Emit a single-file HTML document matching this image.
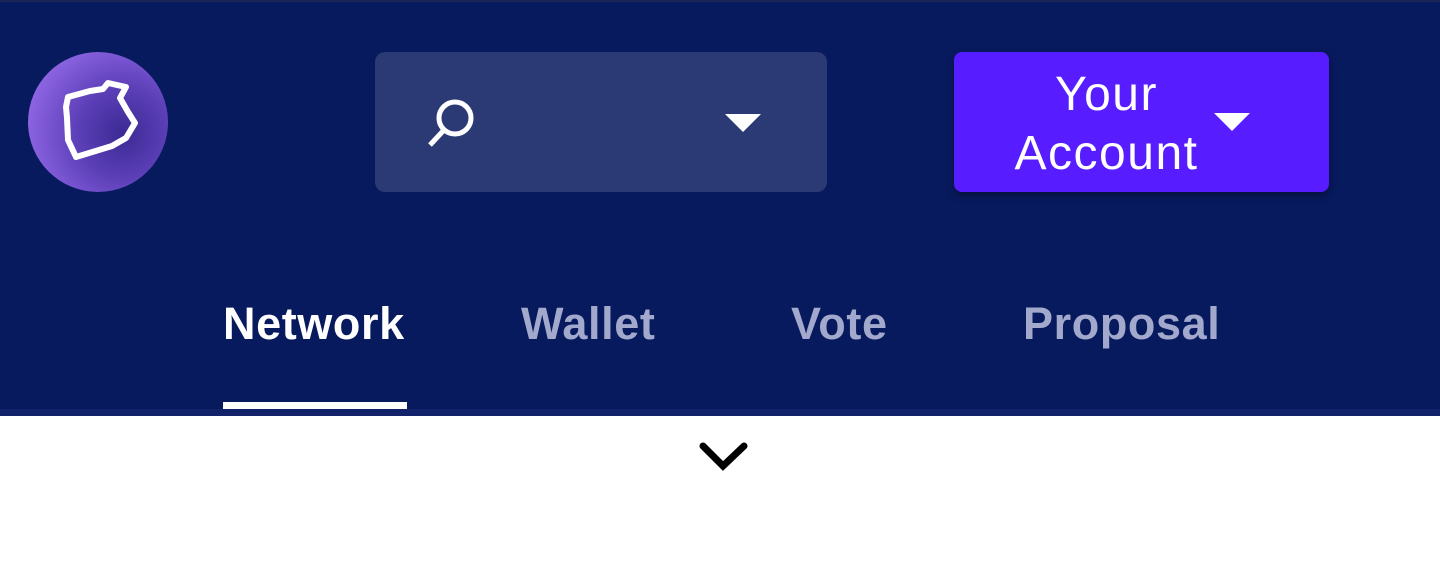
<!DOCTYPE html>
<html><head><meta charset="utf-8"><style>
html,body{margin:0;padding:0;width:1440px;height:578px;overflow:hidden;background:#fff;font-family:"Liberation Sans",sans-serif;}
.nav{position:absolute;left:0;top:0;width:1440px;height:416px;background:#081a5e;}
.topline{position:absolute;left:0;top:0;width:1440px;height:2px;background:#1a2456;}
.strip{position:absolute;left:0;top:409px;width:1440px;height:7px;background:#12226a;}
.logo{position:absolute;left:28px;top:52px;width:140px;height:140px;border-radius:50%;background:radial-gradient(circle at 68% 58%,#3c2a94 0%,#5a3eb6 35%,#8a62e0 75%,#a47cf2 100%);}
.search{position:absolute;left:375px;top:52px;width:452px;height:140px;border-radius:10px;background:#2b3a74;}
.acct{position:absolute;left:954px;top:52px;width:375px;height:140px;border-radius:8px;background:#571cff;box-shadow:0 4px 8px rgba(0,0,0,.35);}
.acct .t{position:absolute;left:0;top:13px;width:305px;text-align:center;color:#fff;font-size:48px;line-height:59px;letter-spacing:1.5px;}
.tab{position:absolute;top:294px;font-size:45px;font-weight:bold;color:#a2a9cc;line-height:60px;letter-spacing:0.6px;}
.ul{position:absolute;left:223px;top:402px;width:184px;height:7px;background:#fff;}
</style></head><body>
<div class="nav">
<div class="topline"></div>
<div class="logo"><svg width="140" height="140" viewBox="0 0 140 140"><path d="M40 45 L62 39 L75 37 L80 31 L98 35 L92 46 L100 60 L107 71 L98 86 L84 94 L48 105 L40 88 L39 66 L38 55 Z" fill="none" stroke="#fff" stroke-width="6" stroke-linejoin="round"/></svg></div>
<div class="search">
<svg style="position:absolute;left:50px;top:42px" width="60" height="60" viewBox="0 0 60 60"><circle cx="30" cy="24" r="16" fill="none" stroke="#fff" stroke-width="5"/><line x1="19" y1="36" x2="5" y2="51" stroke="#fff" stroke-width="5"/></svg>
<svg style="position:absolute;left:350px;top:62px" width="36" height="20"><polygon points="0,0 36,0 18,18" fill="#fff"/></svg>
</div>
<div class="acct"><div class="t">Your<br>Account</div>
<svg style="position:absolute;left:260px;top:61px" width="36" height="20"><polygon points="0,0 36,0 18,18" fill="#fff"/></svg></div>
<div class="tab" style="left:223px;color:#fff">Network</div>
<div class="tab" style="left:521px">Wallet</div>
<div class="tab" style="left:791px">Vote</div>
<div class="tab" style="left:1023px">Proposal</div>
<div class="strip"></div>
<div class="ul"></div>
</div>
<svg style="position:absolute;left:698px;top:438px" width="52" height="36"><polyline points="5,8 25,28 46,8" fill="none" stroke="#000" stroke-width="7" stroke-linecap="round" stroke-linejoin="miter"/></svg>
</body></html>
